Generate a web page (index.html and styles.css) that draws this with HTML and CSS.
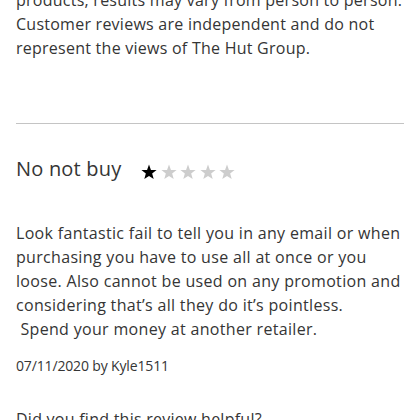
FILE: index.html
```html
<!DOCTYPE html>
<html lang="en">
<head>
<meta charset="utf-8">
<title>Review</title>
<link rel="stylesheet" href="styles.css">
</head>
<body>
<main class="page">
  <p class="disclaimer">products, results may vary from person to person. Customer reviews are independent and do not represent the views of The Hut Group.</p>
  <hr class="divider">
  <article class="review">
    <div class="review-head">
      <h2 class="review-title">No not buy</h2>
      <div class="stars" aria-label="1 out of 5 stars">
        <svg class="star on" viewBox="0 0 14 14"><polygon points="7,0.5 8.7,5.15 13.66,5.34 9.76,8.4 11.11,13.16 7,10.4 2.89,13.16 4.24,8.4 0.34,5.34 5.3,5.15"/></svg>
        <svg class="star" viewBox="0 0 14 14"><polygon points="7,0.5 8.7,5.15 13.66,5.34 9.76,8.4 11.11,13.16 7,10.4 2.89,13.16 4.24,8.4 0.34,5.34 5.3,5.15"/></svg>
        <svg class="star" viewBox="0 0 14 14"><polygon points="7,0.5 8.7,5.15 13.66,5.34 9.76,8.4 11.11,13.16 7,10.4 2.89,13.16 4.24,8.4 0.34,5.34 5.3,5.15"/></svg>
        <svg class="star" viewBox="0 0 14 14"><polygon points="7,0.5 8.7,5.15 13.66,5.34 9.76,8.4 11.11,13.16 7,10.4 2.89,13.16 4.24,8.4 0.34,5.34 5.3,5.15"/></svg>
        <svg class="star" viewBox="0 0 14 14"><polygon points="7,0.5 8.7,5.15 13.66,5.34 9.76,8.4 11.11,13.16 7,10.4 2.89,13.16 4.24,8.4 0.34,5.34 5.3,5.15"/></svg>
      </div>
    </div>
    <p class="review-body">Look fantastic fail to tell you in any email or when purchasing you have to use all at once or you loose. Also cannot be used on any promotion and considering that’s all they do it’s pointless.<br>&nbsp;Spend your money at another retailer.</p>
    <p class="review-meta">07/11/2020 by Kyle1511</p>
    <p class="helpful">Did you find this review helpful?</p>
  </article>
</main>
</body>
</html>
```
FILE: styles.css
```css
html, body {
  margin: 0;
  padding: 0;
  background: #fff;
}
body {
  font-family: "Open Sans", "Noto Sans", sans-serif;
  color: #353535;
}
.page {
  padding: 0 16px;
}
.disclaimer {
  margin: -12px 0 0;
  font-size: 16px;
  line-height: 24px;
  letter-spacing: 0.25px;
}
.divider {
  margin: 63px 0 0;
  border: 0;
  border-top: 1px solid #c4c4c4;
  height: 0;
}
.review-head {
  display: flex;
  align-items: flex-start;
  margin-top: 31px;
}
.review-title {
  margin: 0;
  font-size: 20px;
  line-height: 28px;
  font-weight: 400;
  letter-spacing: 0.2px;
}
.stars {
  display: flex;
  gap: 3.5px;
  margin: 9px 0 0 20px;
}
.star {
  width: 16px;
  height: 16px;
  fill: #cdcdcd;
}
.star.on {
  fill: #000;
}
.review-body {
  margin: 38px 0 0;
  font-size: 16px;
  line-height: 24px;
  letter-spacing: 0.32px;
}
.review-meta {
  margin: 15px 0 0;
  font-size: 14px;
  line-height: 20px;
  letter-spacing: -0.15px;
}
.helpful {
  margin: 31px 0 0;
  font-size: 16px;
  line-height: 24px;
  letter-spacing: 0.25px;
}
```
